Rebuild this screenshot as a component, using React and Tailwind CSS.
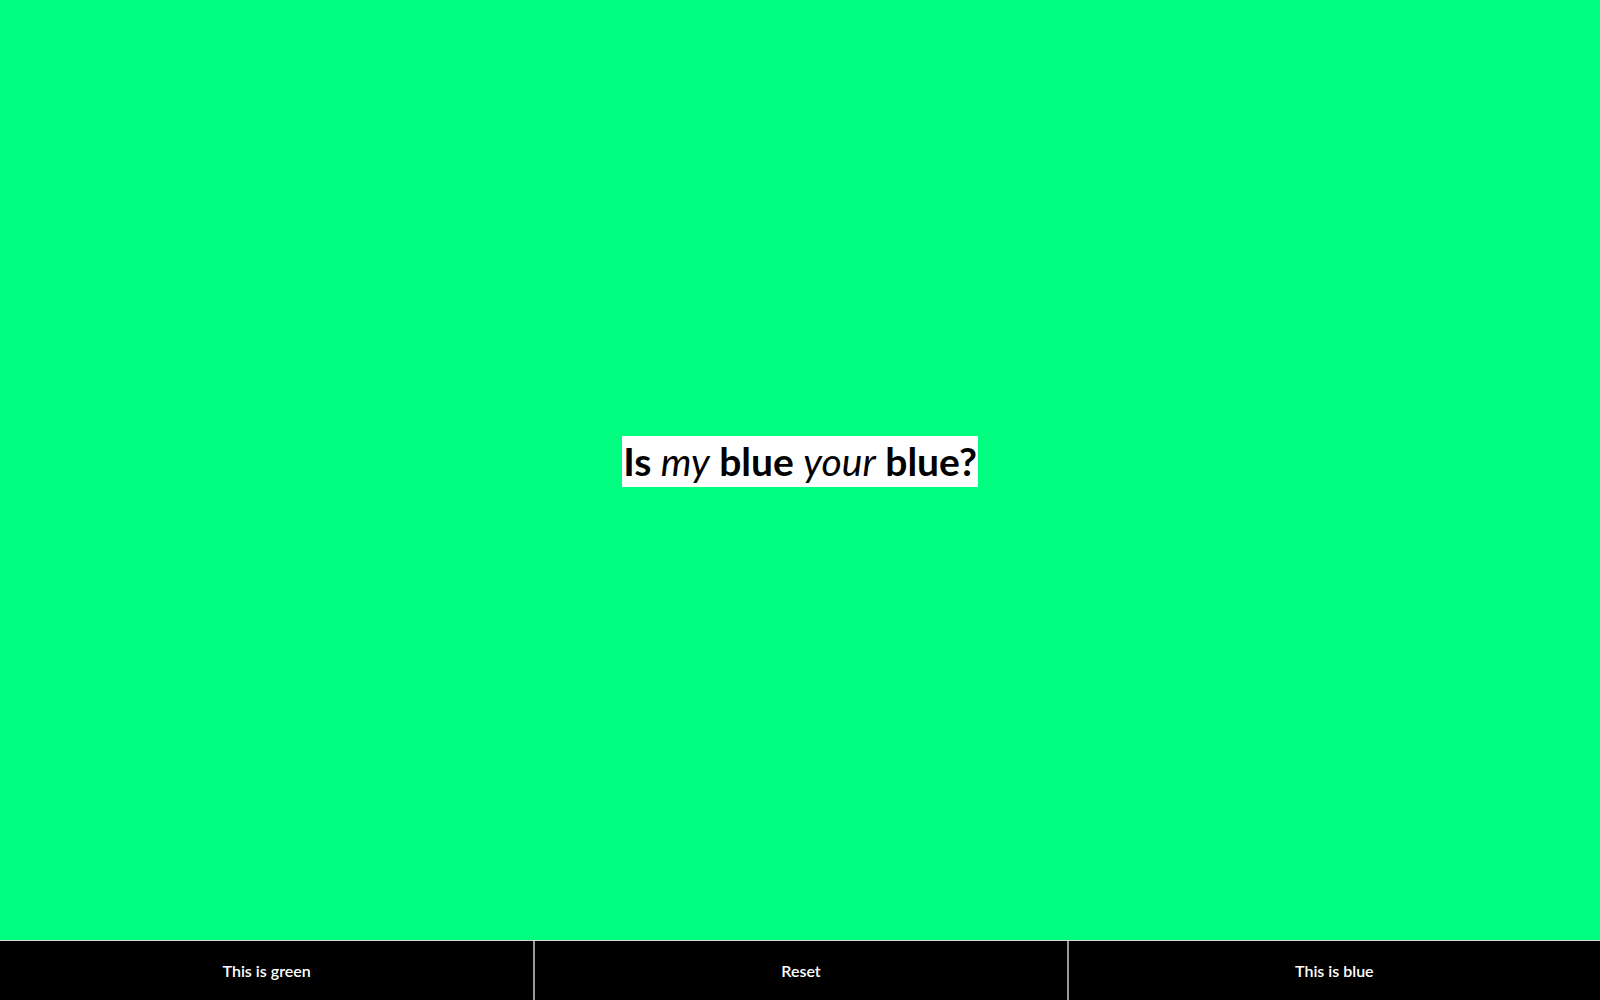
export default function App() {
  return (
    <div
      className="h-screen flex flex-col bg-[#00ff80]"
      style={{ fontFamily: "Lato, 'Open Sans', sans-serif" }}
    >
      {/* Center question */}
      <main className="flex-1 flex items-center justify-center pb-[17px]">
        <h1 className="bg-white px-[1px] text-[39px] leading-[51px] font-bold text-black">
          Is <em className="font-normal">my</em> blue{" "}
          <em className="font-normal">your</em> blue?
        </h1>
      </main>

      {/* Bottom buttons */}
      <div className="h-[60px] grid grid-cols-3 bg-black border-t border-[#d9d9d9]">
        <button className="text-white text-base font-semibold">This is green</button>
        <button className="text-white text-base font-semibold border-l-2 border-[#999]">
          Reset
        </button>
        <button className="text-white text-base font-semibold border-l-2 border-[#999]">
          This is blue
        </button>
      </div>
    </div>
  );
}
